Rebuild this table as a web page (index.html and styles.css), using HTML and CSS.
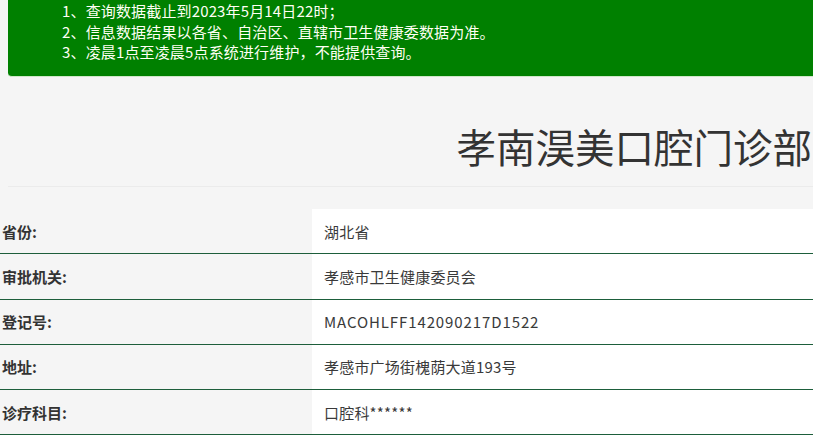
FILE: index.html
```html
<!DOCTYPE html>
<html lang="zh-CN">
<head>
<meta charset="utf-8">
<title>孝南淏美口腔门诊部</title>
<link rel="stylesheet" href="styles.css">
</head>
<body>
<div class="notice">
  <p>1、查询数据截止到2023年5月14日22时；</p>
  <p>2、信息数据结果以各省、自治区、直辖市卫生健康委数据为准。</p>
  <p>3、凌晨1点至凌晨5点系统进行维护，不能提供查询。</p>
</div>
<div class="title-wrap">
  <h1 class="title">孝南淏美口腔门诊部</h1>
</div>
<hr class="divider">
<div class="info">
  <div class="row"><div class="label">省份:</div><div class="value">湖北省</div></div>
  <div class="row"><div class="label">审批机关:</div><div class="value">孝感市卫生健康委员会</div></div>
  <div class="row"><div class="label">登记号:</div><div class="value latin">MACOHLFF142090217D1522</div></div>
  <div class="row"><div class="label">地址:</div><div class="value">孝感市广场街槐荫大道193号</div></div>
  <div class="row"><div class="label">诊疗科目:</div><div class="value">口腔科******</div></div>
</div>
</body>
</html>
```

FILE: styles.css
```css
html, body {
  margin: 0;
  padding: 0;
}
body {
  background: #f5f5f5;
  font-family: "Noto Sans CJK SC", "Noto Sans", sans-serif;
  color: #333;
  font-size: 15px;
  width: 813px;
  overflow: hidden;
}
.notice {
  margin-left: 8px;
  background: #008000;
  color: #fffff4;
  border-bottom: 1px solid #cfe8c8;
  border-bottom-left-radius: 4px;
  padding: 1px 0 14px 54px;
  height: 61px;
}
.notice p {
  margin: 0;
  line-height: 20.5px;
  font-size: 15px;
  letter-spacing: 0.15px;
}
.title-wrap {
  display: flex;
  justify-content: flex-end;
  padding: 0 1px 0 0;
  height: 109px;
  align-items: center;
}
.title {
  margin: 0;
  font-size: 39.5px;
  font-weight: 400;
  color: #333;
  line-height: 1;
  white-space: nowrap;
  padding-top: 28px;
}
.divider {
  margin: 0 0 0 8px;
  border: 0;
  border-top: 1px solid #ebebeb;
  height: 0;
}
.info {
  margin-top: 22px;
}
.row {
  display: grid;
  grid-template-columns: 312px 1fr;
  border-bottom: 1px solid #1d5e3b;
  height: 44.25px;
}
.label {
  display: flex;
  align-items: center;
  padding-left: 2px;
  font-weight: 700;
  font-size: 15px;
  color: #333;
}
.value {
  display: flex;
  align-items: center;
  padding-left: 12px;
  background: #fff;
  color: #3a3a3a;
  font-size: 15px;
  letter-spacing: 0.2px;
}
.latin {
  letter-spacing: 0.9px;
}
```
